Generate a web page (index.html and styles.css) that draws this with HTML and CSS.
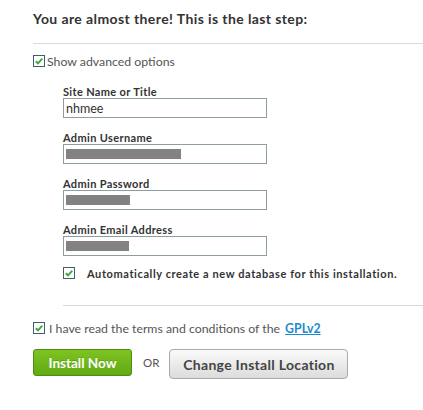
FILE: index.html
```html
<!DOCTYPE html>
<html lang="en">
<head>
    <meta charset="UTF-8">
    <title>Install</title>
    <link rel="stylesheet" href="styles.css">
</head>
<body>
    <div class="installer">
        <h2 class="step-title">You are almost there! This is the last step:</h2>
        <div class="rule"></div>

        <label class="check-row advanced">
            <span class="check"><svg viewBox="0 0 10 10"><path d="M1.8 5.2 L4 7.3 L8.3 2.6" /></svg></span>
            Show advanced options
        </label>

        <div class="fields">
            <div class="field">
                <label class="field-label">Site Name or Title</label>
                <div class="text-input">nhmee</div>
            </div>
            <div class="field">
                <label class="field-label">Admin Username</label>
                <div class="text-input"><span class="redact" style="width: 115px"></span></div>
            </div>
            <div class="field">
                <label class="field-label">Admin Password</label>
                <div class="text-input"><span class="redact" style="width: 64px"></span></div>
            </div>
            <div class="field">
                <label class="field-label">Admin Email Address</label>
                <div class="text-input"><span class="redact" style="width: 63px"></span></div>
            </div>

            <label class="check-row db">
                <span class="check"><svg viewBox="0 0 10 10"><path d="M1.8 5.2 L4 7.3 L8.3 2.6" /></svg></span>
                Automatically create a new database for this installation.
            </label>

            <div class="rule"></div>
        </div>

        <label class="check-row terms">
            <span class="check"><svg viewBox="0 0 10 10"><path d="M1.8 5.2 L4 7.3 L8.3 2.6" /></svg></span>
            I have read the terms and conditions of the <a href="#" class="license">GPLv2</a>
        </label>

        <div class="actions">
            <button class="btn btn-install">Install Now</button>
            <span class="or">OR</span>
            <button class="btn btn-change">Change Install Location</button>
        </div>
    </div>
</body>
</html>
```

FILE: styles.css
```css
/* Installer last step */
body {
    margin: 0;
    background: #ffffff;
    font-family: 'Lato', 'Liberation Sans', sans-serif;
    color: #555;
}

.installer {
    padding: 10px 0 0 33px;
}

.step-title {
    margin: 0;
    font-size: 14px;
    font-weight: 700;
    letter-spacing: 0.4px;
    color: #333;
    line-height: 18px;
}

.rule {
    height: 1px;
    background: #d9d9d9;
    margin-top: 15px;
}

.check-row {
    display: flex;
    align-items: center;
    height: 14px;
    font-size: 12.3px;
    color: #555;
}

.check {
    width: 10px;
    height: 10px;
    border: 1px solid #3f5f6d;
    background: #fff;
    display: inline-flex;
    flex-shrink: 0;
}

.check svg {
    width: 10px;
    height: 10px;
}

.check path {
    fill: none;
    stroke: #3da83d;
    stroke-width: 1.9;
}

.advanced {
    margin-top: 10px;
    gap: 2px;
}

.fields {
    padding-left: 30px;
    margin-top: 18px;
}

.field + .field {
    margin-top: 14px;
}

.field-label {
    display: block;
    font-size: 11px;
    font-weight: 700;
    letter-spacing: 0.35px;
    color: #333;
    line-height: 12px;
}

.text-input {
    box-sizing: border-box;
    width: 204px;
    height: 20px;
    border: 1px solid #8c9ea3;
    padding: 0 2px;
    font-size: 12.5px;
    color: #333;
    display: flex;
    align-items: center;
}

.redact {
    height: 10px;
    background: #828282;
}

.db {
    margin-top: 10px;
    gap: 12px;
    font-size: 11px;
    font-weight: 700;
    letter-spacing: 0.6px;
    color: #333;
}

.fields .rule {
    margin-top: 25px;
}

.terms {
    margin-top: 15px;
    gap: 4px;
}

.license {
    color: #1c8ad0;
    font-weight: 700;
    margin-left: 1px;
}

.actions {
    display: flex;
    align-items: flex-start;
    margin-top: 14px;
}

.btn {
    font-family: inherit;
    font-weight: 700;
    border-radius: 3px;
    cursor: pointer;
    padding: 0;
}

.btn-install {
    width: 99px;
    height: 27px;
    font-size: 13.5px;
    color: #fff;
    text-shadow: 0 -1px 0 rgba(0, 0, 0, 0.15);
    background: linear-gradient(#7dc322, #62aa14);
    border: 1px solid #4f8c12;
}

.or {
    font-size: 11.5px;
    line-height: 27px;
    color: #555;
    margin: 0 10px 0 11px;
}

.btn-change {
    width: 179px;
    height: 30px;
    font-size: 14px;
    letter-spacing: 0.3px;
    color: #444;
    background: linear-gradient(#fafafa, #dcdcdc);
    border: 1px solid #a9a9a9;
    border-radius: 4px;
}
```
